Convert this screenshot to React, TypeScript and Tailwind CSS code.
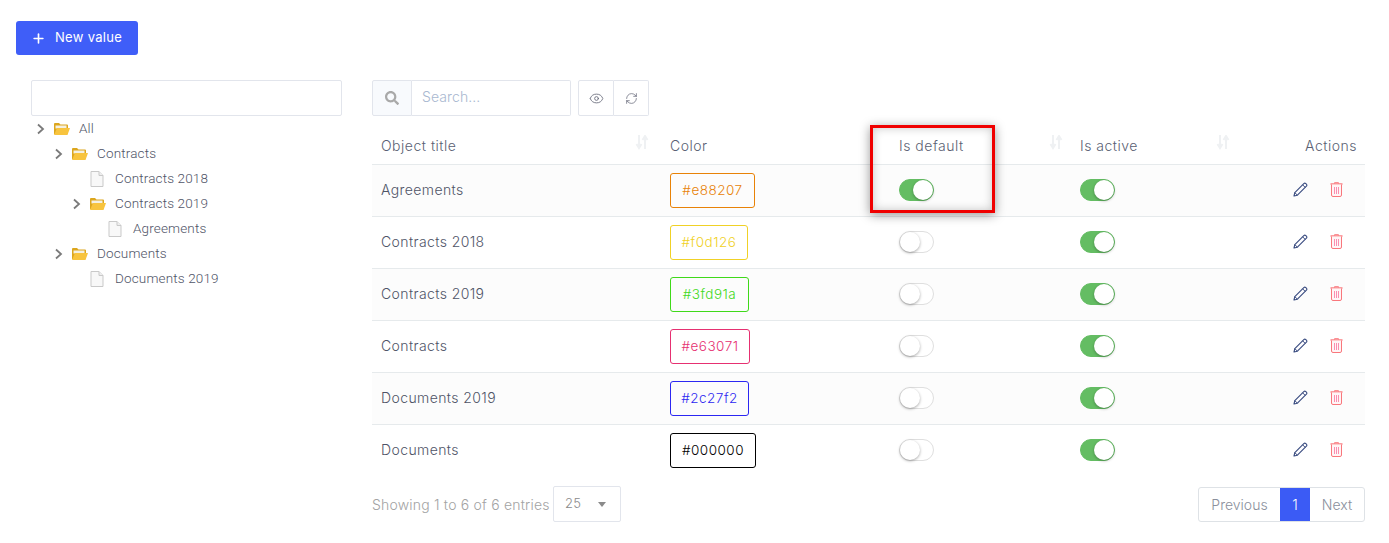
import React from 'react';
import { Eye, Plus, RefreshCw } from 'lucide-react';
import { FaSearch } from 'react-icons/fa';

interface Row {
  title: string;
  hex: string;
  pill: string;
  isDefault: boolean;
  stripe: boolean;
}

const rows: Row[] = [
  { title: 'Agreements', hex: '#e88207', pill: 'w-[85px] border-[#e88207] text-[#e88207]', isDefault: true, stripe: true },
  { title: 'Contracts 2018', hex: '#f0d126', pill: 'w-[78px] border-[#f0d126] text-[#f0d126]', isDefault: false, stripe: false },
  { title: 'Contracts 2019', hex: '#3fd91a', pill: 'w-[79px] border-[#3fd91a] text-[#3fd91a]', isDefault: false, stripe: true },
  { title: 'Contracts', hex: '#e63071', pill: 'w-[80px] border-[#e63071] text-[#e63071]', isDefault: false, stripe: false },
  { title: 'Documents 2019', hex: '#2c27f2', pill: 'w-[79px] border-[#2c27f2] text-[#2c27f2]', isDefault: false, stripe: true },
  { title: 'Documents', hex: '#000000', pill: 'w-[86px] border-[#000000] text-[#000000]', isDefault: false, stripe: false },
];

const Chevron = () => (
  <svg width="10" height="12" viewBox="0 0 10 12" className="shrink-0">
    <path d="M2 1.5 L7 6 L2 10.5" fill="none" stroke="#7a7a7a" strokeWidth="1.8" />
  </svg>
);

const FolderIcon = () => (
  <svg width="16" height="12" viewBox="0 0 16 12" className="shrink-0">
    <path d="M0 1 Q0 0 1 0 H5 L6.5 1.5 H13 Q14 1.5 14 2.5 V11 H0 Z" fill="#dca61e" />
    <rect x="1.5" y="2.5" width="11" height="3" fill="#f4f0e2" />
    <path d="M0 12 L3 5 H16 L13.5 12 Z" fill="#f8c43e" />
  </svg>
);

const FileIcon = () => (
  <svg width="14" height="16" viewBox="0 0 14 16" className="shrink-0">
    <path d="M1 .5 H9 L13 4.5 V15.5 H1 Z" fill="#f8f8f8" stroke="#c9c9c9" />
    <path d="M9 .5 V4.5 H13" fill="#eeeeee" stroke="#c9c9c9" />
  </svg>
);

const SortIcon = () => (
  <svg width="14" height="15" viewBox="0 0 14 15">
    <path d="M4 0 V11 M1.5 9 L4 13 L6.5 9 M10 14 V3 M7.5 5 L10 1 L12.5 5" fill="none" stroke="#eff1f3" strokeWidth="2" />
  </svg>
);

const PencilIcon = () => (
  <svg width="15" height="15" viewBox="0 0 15 15">
    <path d="M1 14 L1.8 10.6 L10.8 1.6 Q11.8 .7 12.8 1.6 L13.4 2.2 Q14.3 3.2 13.4 4.2 L4.4 13.2 Z" fill="#fdfdff" stroke="#3a4c80" strokeWidth="1.1" strokeLinejoin="round" />
    <path d="M9.6 2.8 L12.2 5.4 M1.8 10.6 L4.4 13.2" fill="none" stroke="#3a4c80" strokeWidth="1" />
  </svg>
);

const TrashIcon = () => (
  <svg width="13" height="15" viewBox="0 0 13 15">
    <path d="M4.5 1.5 V.7 H8.5 V1.5" fill="none" stroke="#f9777c" />
    <path d="M.5 2 H12.5" fill="none" stroke="#f9777c" strokeWidth="1.4" />
    <path d="M1.5 2.5 V13 Q1.5 14.5 3 14.5 H10 Q11.5 14.5 11.5 13 V2.5" fill="#fff5f6" stroke="#f9777c" />
    <path d="M4.5 5 V12 M6.5 5 V12 M8.5 5 V12" fill="none" stroke="#fa8fb0" />
  </svg>
);

const Toggle = ({ on }: { on: boolean }) => (
  <div
    className={
      on
        ? 'relative h-[22px] w-[35px] rounded-full border border-[#64bd63] bg-[#64bd63]'
        : 'relative h-[22px] w-[35px] rounded-full border border-[#dfdfdf] bg-white'
    }
  >
    <div
      className={
        on
          ? 'absolute right-0 top-0 h-5 w-5 rounded-full bg-white shadow-[0_1px_3px_rgba(0,0,0,0.3)]'
          : 'absolute left-0 top-0 h-5 w-5 rounded-full bg-white shadow-[0_1px_3px_rgba(0,0,0,0.35)]'
      }
    />
  </div>
);

const TreeRow = ({ depth, label, folder }: { depth: string; label: string; folder?: boolean }) => (
  <div className={`flex h-[25px] items-center text-[13.5px] tracking-[0.15px] text-[#4f5467] ${depth}`}>
    <span className="flex w-[18px] justify-start">{folder && <Chevron />}</span>
    <span className="flex w-[25px] justify-start">{folder ? <FolderIcon /> : <FileIcon />}</span>
    <span>{label}</span>
  </div>
);

export default function App() {
  return (
    <div className="relative h-[543px] w-[1389px] overflow-hidden bg-white pl-4 pt-[21px] font-['Inter',sans-serif] text-[14px] font-light text-[#4f5467]">
      <button className="flex h-[34px] w-[122px] items-center rounded-[3px] bg-[#3f5ef8] pl-[15px] text-[13px] font-normal tracking-[0.3px] text-white">
        <Plus size={15} strokeWidth={2.6} />
        <span className="ml-[9px]">New value</span>
      </button>

      <div className="mt-[25px] flex">
        {/* Tree */}
        <div className="ml-[15px] w-[311px] font-['Roboto',sans-serif] font-light">
          <input className="block h-9 w-full rounded-[2px] border border-[#e2e5ec] bg-white" />
          <TreeRow depth="pl-[5px]" label="All" folder />
          <TreeRow depth="pl-[23px]" label="Contracts" folder />
          <TreeRow depth="pl-[41px]" label="Contracts 2018" />
          <TreeRow depth="pl-[41px]" label="Contracts 2019" folder />
          <TreeRow depth="pl-[59px]" label="Agreements" />
          <TreeRow depth="pl-[23px]" label="Documents" folder />
          <TreeRow depth="pl-[41px]" label="Documents 2019" />
        </div>

        {/* Table */}
        <div className="ml-[30px] w-[993px]">
          <div className="flex h-9">
            <div className="flex w-[40px] items-center justify-center rounded-l-[2px] border border-[#e2e5ec] bg-[#f8fafd]">
              <FaSearch size={14} className="text-[#a9a9a9]" />
            </div>
            <div className="flex w-[159px] items-center rounded-r-[2px] border border-l-0 border-[#e2e5ec] pb-[3px] pl-[10px] tracking-[0.1px] text-[#a9b8d0]">
              Search...
            </div>
            <div className="ml-[7px] flex w-[36px] items-center justify-center rounded-l-[2px] border border-[#e2e5ec]">
              <Eye size={15} strokeWidth={1.3} className="text-[#5f6373]" />
            </div>
            <div className="flex w-[35px] items-center justify-center rounded-r-[2px] border border-l-0 border-[#e2e5ec]">
              <RefreshCw size={13} strokeWidth={1.3} className="text-[#5f6373]" />
            </div>
          </div>

          <table className="mt-[9px] w-full table-fixed border-collapse">
            <thead>
              <tr className="h-[39px] border-b border-[#e6eaec] text-left text-[14px] tracking-[0.5px] text-[#5a5f73]">
                <th className="relative w-[289px] pl-[9px] pt-[3px] font-light">
                  Object title
                  <span className="absolute right-[12px] top-[10px]"><SortIcon /></span>
                </th>
                <th className="w-[229px] pl-[9px] pt-[3px] font-light">Color</th>
                <th className="relative w-[181px] pl-[9px] pt-[3px] font-light">
                  Is default
                  <span className="absolute right-[8px] top-[10px]"><SortIcon /></span>
                </th>
                <th className="relative w-[169px] pl-[9px] pt-[3px] font-light">
                  Is active
                  <span className="absolute right-[10px] top-[10px]"><SortIcon /></span>
                </th>
                <th className="pr-[8px] pt-[3px] text-right font-light">Actions</th>
              </tr>
            </thead>
            <tbody>
              {rows.map((row) => (
                <tr
                  key={row.title}
                  className={
                    row.stripe
                      ? 'h-[52px] border-b border-[#e6eaec] bg-[#fcfcfc] last:border-b-0'
                      : 'h-[52px] border-b border-[#e6eaec] last:border-b-0'
                  }
                >
                  <td className="pb-[2px] pl-[9px] tracking-[0.4px] text-[#4f5467]">{row.title}</td>
                  <td className="pl-[9px]">
                    <div className={`flex h-[35px] items-center justify-center rounded-[3px] border text-[13.5px] tracking-[0.5px] ${row.pill}`}>
                      {row.hex}
                    </div>
                  </td>
                  <td className="pl-[9px]"><Toggle on={row.isDefault} /></td>
                  <td className="pl-[9px]"><Toggle on /></td>
                  <td>
                    <div className="mb-[2px] flex items-center justify-end gap-[22px] pr-[22px]">
                      <PencilIcon />
                      <TrashIcon />
                    </div>
                  </td>
                </tr>
              ))}
            </tbody>
          </table>

          <div className="mt-[10px] flex items-start justify-between">
            <div className="flex items-center tracking-[0.2px] text-[#a3a3a3]">
              <span className="w-[181px]">Showing 1 to 6 of 6 entries</span>
              <div className="flex h-9 w-[68px] items-center justify-between rounded-[2px] border border-[#e2e5ec] pl-[11px] pr-[14px] text-[13px] text-[#8a8a8a]">
                25
                <span className="h-0 w-0 border-x-[4px] border-t-[5px] border-x-transparent border-t-[#8a8a8a]" />
              </div>
            </div>
            <div className="mt-px flex h-[35px] overflow-hidden rounded-[3px] border border-[#dee2e6] text-[#8a8f9c]">
              <span className="flex w-[81px] items-center justify-center">Previous</span>
              <span className="flex w-[30px] items-center justify-center bg-[#3b5bf5] text-white">1</span>
              <span className="flex w-[54px] items-center justify-center">Next</span>
            </div>
          </div>
        </div>
      </div>

      {/* Red annotation drawn over the table */}
      <div className="absolute left-[870px] top-[125px] h-[88px] w-[125px] border-[3px] border-[#f00000] shadow-[0_2px_10px_rgba(0,0,0,0.4),inset_0_0_10px_rgba(0,0,0,0.22)]" />
    </div>
  );
}
